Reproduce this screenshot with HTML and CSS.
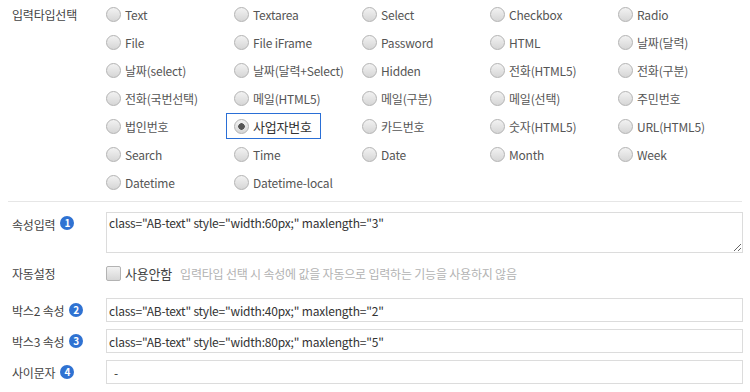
FILE: index.html
```html
<!doctype html>
<html>
  <head>
    <title>입력타입 설정</title>
    <link rel="stylesheet" href="styles.css">
  </head>
  <body>
    <div class="form">
      <div class="row row_types">
        <div class="label">입력타입선택</div>
        <div class="field">
          <div class="type_grid">
            <label class="type"><input type="radio" name="type"><span>Text</span></label>
            <label class="type"><input type="radio" name="type"><span>Textarea</span></label>
            <label class="type"><input type="radio" name="type"><span>Select</span></label>
            <label class="type"><input type="radio" name="type"><span>Checkbox</span></label>
            <label class="type"><input type="radio" name="type"><span>Radio</span></label>

            <label class="type"><input type="radio" name="type"><span>File</span></label>
            <label class="type"><input type="radio" name="type"><span>File iFrame</span></label>
            <label class="type"><input type="radio" name="type"><span>Password</span></label>
            <label class="type"><input type="radio" name="type"><span>HTML</span></label>
            <label class="type"><input type="radio" name="type"><span>날짜(달력)</span></label>

            <label class="type"><input type="radio" name="type"><span>날짜(select)</span></label>
            <label class="type"><input type="radio" name="type"><span>날짜(달력+Select)</span></label>
            <label class="type"><input type="radio" name="type"><span>Hidden</span></label>
            <label class="type"><input type="radio" name="type"><span>전화(HTML5)</span></label>
            <label class="type"><input type="radio" name="type"><span>전화(구분)</span></label>

            <label class="type"><input type="radio" name="type"><span>전화(국번선택)</span></label>
            <label class="type"><input type="radio" name="type"><span>메일(HTML5)</span></label>
            <label class="type"><input type="radio" name="type"><span>메일(구분)</span></label>
            <label class="type"><input type="radio" name="type"><span>메일(선택)</span></label>
            <label class="type"><input type="radio" name="type"><span>주민번호</span></label>

            <label class="type"><input type="radio" name="type"><span>법인번호</span></label>
            <label class="type selected"><input type="radio" name="type" checked><span>사업자번호</span></label>
            <label class="type"><input type="radio" name="type"><span>카드번호</span></label>
            <label class="type"><input type="radio" name="type"><span>숫자(HTML5)</span></label>
            <label class="type"><input type="radio" name="type"><span>URL(HTML5)</span></label>

            <label class="type"><input type="radio" name="type"><span>Search</span></label>
            <label class="type"><input type="radio" name="type"><span>Time</span></label>
            <label class="type"><input type="radio" name="type"><span>Date</span></label>
            <label class="type"><input type="radio" name="type"><span>Month</span></label>
            <label class="type"><input type="radio" name="type"><span>Week</span></label>

            <label class="type"><input type="radio" name="type"><span>Datetime</span></label>
            <label class="type"><input type="radio" name="type"><span>Datetime-local</span></label>
          </div>
        </div>
      </div>

      <div class="divider"></div>

      <div class="row row_attr">
        <div class="label">속성입력 <span class="badge">1</span></div>
        <div class="field">
          <textarea class="attr_text">class="AB-text" style="width:60px;" maxlength="3"</textarea>
        </div>
      </div>

      <div class="row row_auto">
        <div class="label">자동설정</div>
        <div class="field auto_field">
          <label class="check"><input type="checkbox"><span>사용안함</span></label>
          <span class="help">입력타입 선택 시 속성에 값을 자동으로 입력하는 기능을 사용하지 않음</span>
        </div>
      </div>

      <div class="row row_input first_input">
        <div class="label">박스2 속성 <span class="badge">2</span></div>
        <div class="field">
          <input type="text" class="attr_input" value='class="AB-text" style="width:40px;" maxlength="2"'>
        </div>
      </div>

      <div class="row row_input">
        <div class="label">박스3 속성 <span class="badge">3</span></div>
        <div class="field">
          <input type="text" class="attr_input" value='class="AB-text" style="width:80px;" maxlength="5"'>
        </div>
      </div>

      <div class="row row_input">
        <div class="label">사이문자 <span class="badge">4</span></div>
        <div class="field">
          <input type="text" class="attr_input sep_input" value="-">
        </div>
      </div>
    </div>
  </body>
</html>
```

FILE: styles.css
```css
body {
  margin: 0;
  background-color: #fff;
  font-family: "Noto Sans CJK KR", "Noto Sans", sans-serif;
  font-size: 12px;
  letter-spacing: -0.2px;
  color: #444;
}

.form {
  width: 750px;
}

.row {
  display: flex;
}

.label {
  width: 106px;
  box-sizing: border-box;
  padding-left: 12px;
  color: #444;
  display: flex;
  align-items: center;
  gap: 5px;
  white-space: nowrap;
}

.field {
  width: 637px;
}

/* input type grid */
.row_types .label {
  height: 28px;
}

.type_grid {
  display: grid;
  grid-template-columns: repeat(5, 128px);
  grid-auto-rows: 28px;
}

.type {
  display: flex;
  align-items: center;
  gap: 4px;
  color: #555;
  white-space: nowrap;
}

.type input,
.check input {
  appearance: none;
  -webkit-appearance: none;
  margin: 0;
  width: 15px;
  height: 15px;
  box-sizing: border-box;
  border: 1px solid #b3b3b3;
  background: linear-gradient(#f2f2f2, #d6d6d6);
  flex: none;
}

.type input {
  border-radius: 50%;
}

.type input:checked {
  background: radial-gradient(circle, #555 0, #555 3px, transparent 3.5px), linear-gradient(#f2f2f2, #d6d6d6);
}

.type.selected {
  margin-left: -8px;
  padding-left: 7px;
  width: 95px;
  height: 26px;
  box-sizing: border-box;
  border: 1px solid #2a6fd6;
  align-self: center;
  color: #333;
  font-size: 13px;
}

.divider {
  margin: 5px 8px 0;
  border-top: 1px solid #e6e6e6;
}

/* attribute fields */
.badge {
  display: inline-flex;
  align-items: center;
  justify-content: center;
  width: 14px;
  height: 14px;
  border-radius: 50%;
  background-color: #2f72d2;
  color: #fff;
  font-size: 10px;
  font-weight: bold;
  letter-spacing: 0;
  line-height: 1;
}

.row_attr {
  margin-top: 10px;
}
.row_attr .label {
  align-items: flex-start;
  padding-top: 4px;
  height: 20px;
}

.attr_text {
  display: block;
  width: 637px;
  height: 41px;
  box-sizing: border-box;
  margin: 0;
  padding: 2px 2px;
  border: 1px solid #dcdcdc;
  font-family: "Noto Sans CJK KR", "Noto Sans", sans-serif;
  font-size: 12px;
  letter-spacing: -0.2px;
  color: #333;
  line-height: 16px;
}

.row_auto {
  margin-top: 8px;
  height: 24px;
}

.auto_field {
  display: flex;
  align-items: center;
}

.check {
  display: flex;
  align-items: center;
  gap: 4px;
  color: #444;
  font-size: 13px;
}

.check input {
  border-radius: 2px;
}

.help {
  margin-left: 8px;
  color: #b3b3b3;
}

.row_input {
  margin-top: 7px;
}
.first_input {
  margin-top: 13px;
}

.attr_input {
  display: block;
  width: 637px;
  height: 24px;
  box-sizing: border-box;
  margin: 0;
  padding: 0 2px;
  border: 1px solid #dcdcdc;
  font-family: "Noto Sans CJK KR", "Noto Sans", sans-serif;
  font-size: 12px;
  letter-spacing: -0.2px;
  color: #333;
}

.sep_input {
  padding-left: 7px;
}
```
